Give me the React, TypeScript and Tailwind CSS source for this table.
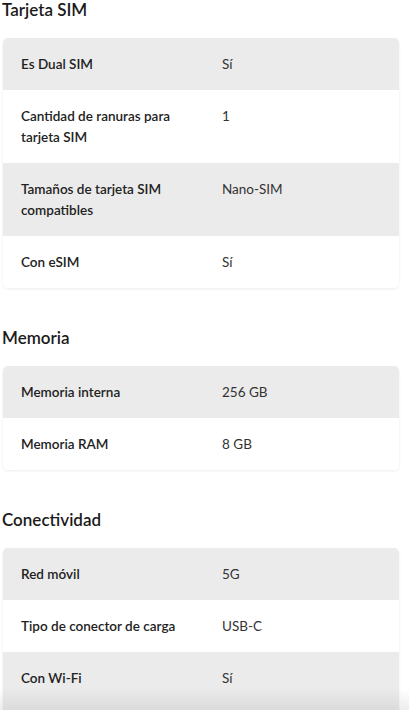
import React from "react";

type Row = { label: string; value: string };
type Section = { title: string; rows: Row[] };

const sections: Section[] = [
  {
    title: "Tarjeta SIM",
    rows: [
      { label: "Es Dual SIM", value: "Sí" },
      { label: "Cantidad de ranuras para tarjeta SIM", value: "1" },
      { label: "Tamaños de tarjeta SIM compatibles", value: "Nano-SIM" },
      { label: "Con eSIM", value: "Sí" },
    ],
  },
  {
    title: "Memoria",
    rows: [
      { label: "Memoria interna", value: "256 GB" },
      { label: "Memoria RAM", value: "8 GB" },
    ],
  },
  {
    title: "Conectividad",
    rows: [
      { label: "Red móvil", value: "5G" },
      { label: "Tipo de conector de carga", value: "USB-C" },
      { label: "Con Wi-Fi", value: "Sí" },
    ],
  },
];

export default function App() {
  return (
    <div
      className="relative h-[710px] w-[409px] overflow-hidden bg-white text-[#222]"
      style={{ fontFamily: "Lato, 'Noto Sans', sans-serif" }}
    >
      <div className="flex flex-col gap-[40px]">
        {sections.map((s, si) => (
          <section key={s.title} className="flex flex-col">
            <h2 className="pl-[2px] text-[17px] font-semibold leading-[20px] text-[#1b1b1b]">
              {s.title}
            </h2>
            <div className="ml-[3px] mt-[18px] w-[396px] overflow-hidden rounded-[5px] shadow-[0_1px_3px_rgba(0,0,0,0.08)]">
              {s.rows.map((r, i) => {
                const lastOfPage = si === sections.length - 1 && i === s.rows.length - 1;
                return (
                  <div
                    key={r.label}
                    className={
                      "flex pt-[15.5px] text-[13.5px] leading-[21px] " +
                      (lastOfPage ? "pb-[30px] " : "pb-[15.5px] ") +
                      (i % 2 === 0 ? "bg-[#ebebeb]" : "bg-white")
                    }
                  >
                    <div className="w-[219px] shrink-0 pl-[18px] pr-[30px] font-semibold text-[#222]">
                      {r.label}
                    </div>
                    <div className="flex-1 pr-4 text-[#333]">{r.value}</div>
                  </div>
                );
              })}
            </div>
          </section>
        ))}
      </div>
      <div className="pointer-events-none absolute bottom-0 left-0 h-[22px] w-full bg-gradient-to-b from-transparent to-[rgba(0,0,0,0.07)]" />
    </div>
  );
}
